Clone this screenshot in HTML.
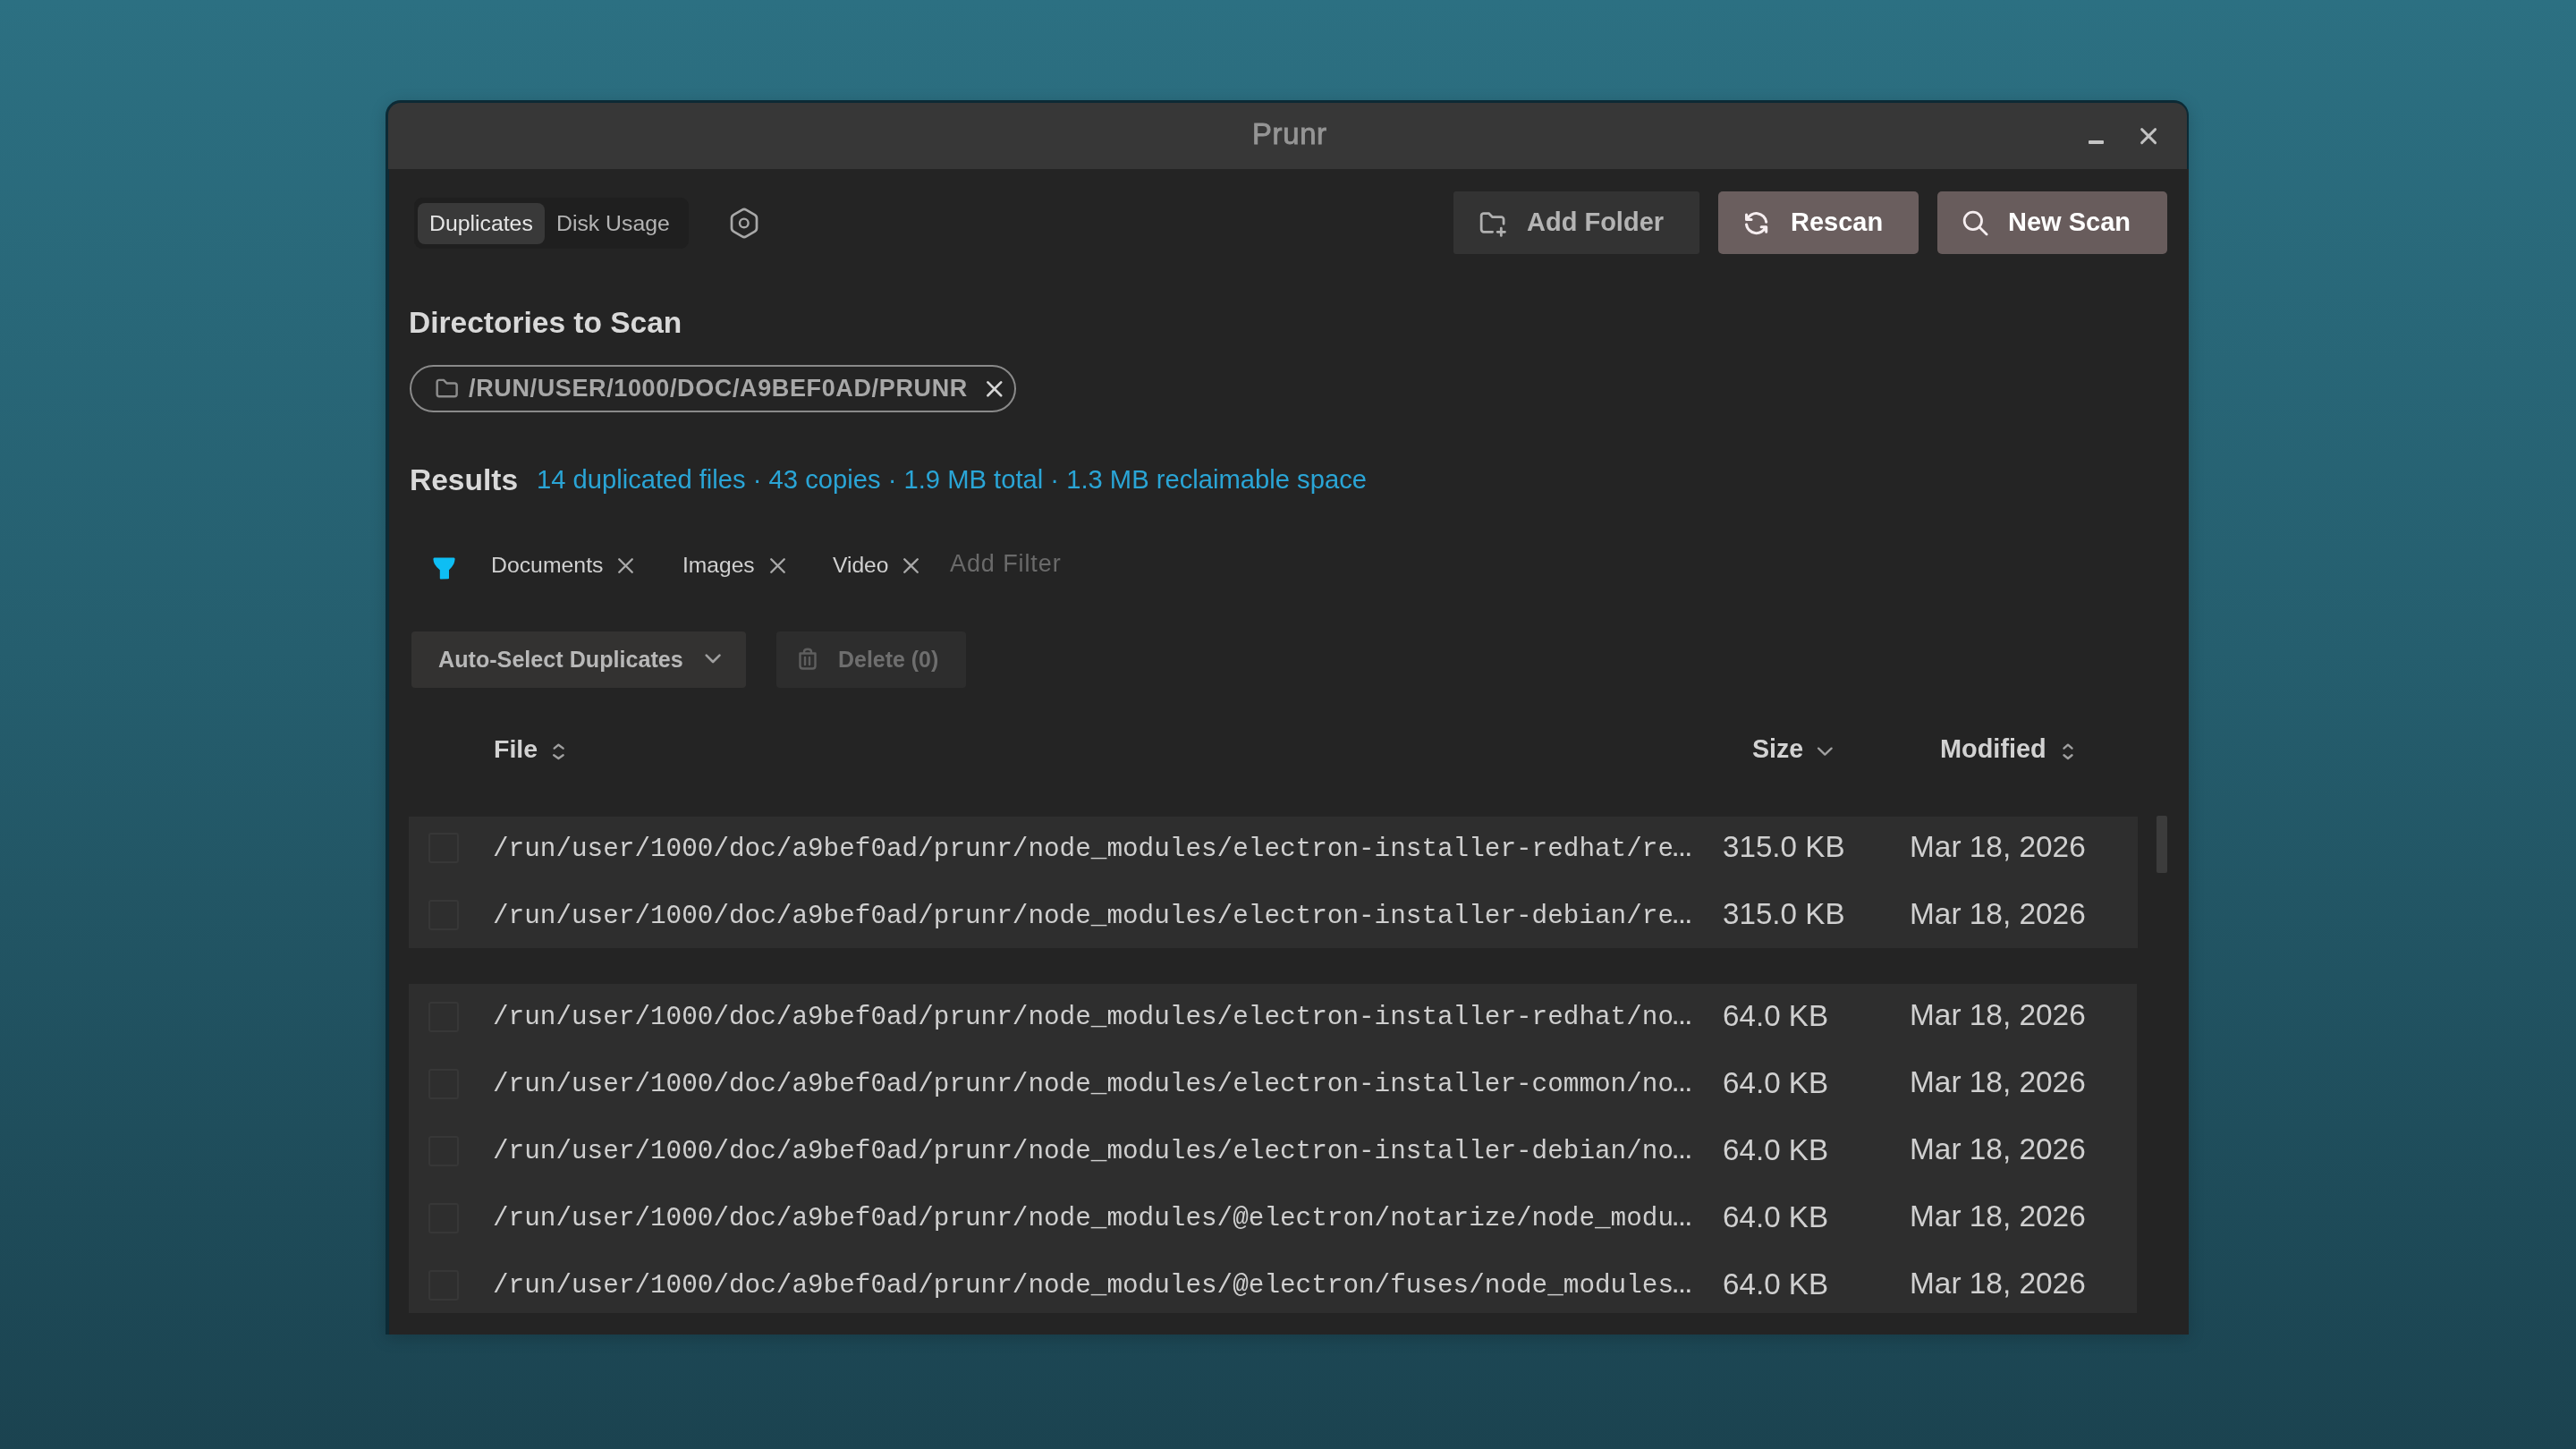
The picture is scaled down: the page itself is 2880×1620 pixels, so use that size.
<!DOCTYPE html>
<html><head><meta charset="utf-8"><style>
html,body{margin:0;padding:0;width:2880px;height:1620px;overflow:hidden}
body{background:linear-gradient(180deg,#2c7082 0%,#255e6e 45%,#1b4350 100%);position:relative;font-family:'Liberation Sans', sans-serif}
body>div,body>svg{position:absolute}
.t{white-space:pre;will-change:transform}
</style></head><body>
<div style="left:431px;top:112px;width:2016px;height:1380px;border-radius:17px 17px 0 0;background:#0c2a35;box-shadow:0 4px 18px rgba(0,0,0,0.18)"></div>
<div style="left:434px;top:115px;width:2011px;height:74px;border-radius:14px 14px 0 0;background:#373737"></div>
<div style="left:435px;top:189px;width:2012px;height:1303px;background:#242424"></div>
<div class="t" style="left:1399.50px;top:133.73px;font-size:32.8px;line-height:32.8px;color:#959595;font-weight:400;font-family:'Liberation Sans', sans-serif;-webkit-text-stroke:0.9px #959595;letter-spacing:0.7px">Prunr</div>
<div style="left:2335px;top:157px;width:17px;height:4px;background:#c4c4c4;border-radius:1px"></div>
<svg style="left:2390px;top:140px;width:24px;height:24px;" viewBox="0 0 24 24" fill="none" stroke-linecap="round" stroke-linejoin="round"><path d="M4.6 4.6L19.6 19.6M19.6 4.6L4.6 19.6" stroke="#c2c2c2" stroke-width="2.9"/></svg>
<div style="left:463px;top:221px;width:307px;height:57px;background:#1f1f1f;border-radius:9px"></div>
<div style="left:467px;top:227px;width:142px;height:46px;background:#393939;border-radius:8px"></div>
<div class="t" style="left:479.50px;top:237.50px;font-size:24.8px;line-height:24.8px;color:#e6e6e6;font-weight:400;font-family:'Liberation Sans', sans-serif;">Duplicates</div>
<div class="t" style="left:621.50px;top:237.50px;font-size:24.8px;line-height:24.8px;color:#b4b4b4;font-weight:400;font-family:'Liberation Sans', sans-serif;">Disk Usage</div>
<svg style="left:810px;top:226px;width:44px;height:48px;" viewBox="0 0 44 48" fill="none" stroke-linecap="round" stroke-linejoin="round"><path d="M24.25 8.60 L33.75 14.10 Q36.00 15.40 36.00 18.00 L36.00 29.00 Q36.00 31.60 33.75 32.90 L24.25 38.40 Q22.00 39.70 19.75 38.40 L10.25 32.90 Q8.00 31.60 8.00 29.00 L8.00 18.00 Q8.00 15.40 10.25 14.10 L19.75 8.60 Q22.00 7.30 24.25 8.60 Z" stroke="#a8a8a8" stroke-width="2.7"/><circle cx="21.8" cy="23.4" r="4.8" stroke="#a8a8a8" stroke-width="2.4"/></svg>
<div style="left:1625px;top:214px;width:275px;height:70px;background:#333333;border-radius:3px"></div>
<div style="left:1921px;top:214px;width:224px;height:70px;background:#6a5e5e;border-radius:5px"></div>
<div style="left:2166px;top:214px;width:257px;height:70px;background:#685c5c;border-radius:5px"></div>
<svg style="left:1652.2px;top:233.3px;width:33.24px;height:33.24px;" viewBox="0 0 24 24" fill="none" stroke-linecap="round" stroke-linejoin="round"><path d="M12 19h-7a2 2 0 0 1 -2 -2v-11a2 2 0 0 1 2 -2h4l3 3h7a2 2 0 0 1 2 2v3.5M16 19h6M19 16v6" stroke="#b0b0b0" stroke-width="2"/></svg>
<div class="t" style="left:1706.50px;top:234.15px;font-size:29px;line-height:29px;color:#b4b4b4;font-weight:700;font-family:'Liberation Sans', sans-serif;">Add Folder</div>
<svg style="left:1946.9px;top:233.3px;width:33.24px;height:33.24px;" viewBox="0 0 24 24" fill="none" stroke-linecap="round" stroke-linejoin="round"><path d="M20 11a8.1 8.1 0 0 0 -15.5 -2m-.5 -4v4h4M4 13a8.1 8.1 0 0 0 15.5 2m.5 4v-4h-4" stroke="#f6eef0" stroke-width="2.2"/></svg>
<div class="t" style="left:2002.00px;top:234.15px;font-size:29px;line-height:29px;color:#ffffff;font-weight:700;font-family:'Liberation Sans', sans-serif;">Rescan</div>
<svg style="left:2192px;top:233.4px;width:33.24px;height:33.24px;" viewBox="0 0 24 24" fill="none" stroke-linecap="round" stroke-linejoin="round"><circle cx="10" cy="10" r="7" stroke="#f6eef0" stroke-width="2"/><path d="M21 21l-6 -6" stroke="#f6eef0" stroke-width="2"/></svg>
<div class="t" style="left:2244.50px;top:234.15px;font-size:29px;line-height:29px;color:#ffffff;font-weight:700;font-family:'Liberation Sans', sans-serif;">New Scan</div>
<div class="t" style="left:457.20px;top:343.64px;font-size:33.5px;line-height:33.5px;color:#d9d9d9;font-weight:700;font-family:'Liberation Sans', sans-serif;">Directories to Scan</div>
<div style="left:458px;top:408px;width:678px;height:53px;box-sizing:border-box;border:2px solid #8a8a8a;border-radius:27px"></div>
<svg style="left:484.9px;top:420.1px;width:29.3px;height:29.3px;" viewBox="0 0 24 24" fill="none" stroke-linecap="round" stroke-linejoin="round"><path d="M5 4h4l3 3h7a2 2 0 0 1 2 2v8a2 2 0 0 1 -2 2h-14a2 2 0 0 1 -2 -2v-11a2 2 0 0 1 2 -2" stroke="#8c8c8c" stroke-width="2"/></svg>
<div class="t" style="left:523.50px;top:421.44px;font-size:27px;line-height:27px;color:#a8a8a8;font-weight:700;font-family:'Liberation Sans', sans-serif;letter-spacing:0.63px">/RUN/USER/1000/DOC/A9BEF0AD/PRUNR</div>
<svg style="left:1096.6px;top:419.9px;width:29.6px;height:29.6px;" viewBox="0 0 24 24" fill="none" stroke-linecap="round" stroke-linejoin="round"><path d="M18 6l-12 12M6 6l12 12" stroke="#d4d4d4" stroke-width="2.2"/></svg>
<div class="t" style="left:457.80px;top:519.64px;font-size:33.5px;line-height:33.5px;color:#d9d9d9;font-weight:700;font-family:'Liberation Sans', sans-serif;">Results</div>
<div class="t" style="left:599.50px;top:521.88px;font-size:29.2px;line-height:29.2px;color:#2aa5d6;font-weight:400;font-family:'Liberation Sans', sans-serif;">14 duplicated files · 43 copies · 1.9 MB total · 1.3 MB reclaimable space</div>
<svg style="left:484px;top:623px;width:25px;height:25px;" viewBox="0 0 25 25" fill="none" stroke-linecap="round" stroke-linejoin="round"><path d="M1.6 0.6 H23.4 Q24.8 0.6 24.6 2.2 Q24.2 5.5 23.3 7.6 Q21.2 11.6 18 14.2 V23.2 Q18 24.1 17 24.2 L8.8 24.6 Q7.8 24.6 7.8 23.6 V14.2 Q4 11.6 1.8 7.6 Q0.7 5.5 0.4 2.2 Q0.3 0.6 1.6 0.6 Z" fill="#0ebef4" stroke="none"/></svg>
<div class="t" style="left:548.50px;top:619.50px;font-size:24.8px;line-height:24.8px;color:#d0d0d0;font-weight:400;font-family:'Liberation Sans', sans-serif;">Documents</div>
<svg style="left:685.3px;top:618.3px;width:29px;height:29px;" viewBox="0 0 24 24" fill="none" stroke-linecap="round" stroke-linejoin="round"><path d="M18 6l-12 12M6 6l12 12" stroke="#a8a8a8" stroke-width="2"/></svg>
<div class="t" style="left:762.50px;top:619.67px;font-size:24.6px;line-height:24.6px;color:#d0d0d0;font-weight:400;font-family:'Liberation Sans', sans-serif;">Images</div>
<svg style="left:854.8px;top:618.3px;width:29px;height:29px;" viewBox="0 0 24 24" fill="none" stroke-linecap="round" stroke-linejoin="round"><path d="M18 6l-12 12M6 6l12 12" stroke="#a8a8a8" stroke-width="2"/></svg>
<div class="t" style="left:930.50px;top:619.67px;font-size:24.6px;line-height:24.6px;color:#d0d0d0;font-weight:400;font-family:'Liberation Sans', sans-serif;">Video</div>
<svg style="left:1003.8px;top:618.3px;width:29px;height:29px;" viewBox="0 0 24 24" fill="none" stroke-linecap="round" stroke-linejoin="round"><path d="M18 6l-12 12M6 6l12 12" stroke="#a8a8a8" stroke-width="2"/></svg>
<div class="t" style="left:1062.00px;top:617.14px;font-size:27px;line-height:27px;color:#6a6a6a;font-weight:400;font-family:'Liberation Sans', sans-serif;letter-spacing:0.9px">Add Filter</div>
<div style="left:460px;top:706px;width:373.5px;height:63px;background:#333231;border-radius:4px"></div>
<div class="t" style="left:489.80px;top:725.01px;font-size:25.15px;line-height:25.15px;color:#b8b8b8;font-weight:700;font-family:'Liberation Sans', sans-serif;">Auto-Select Duplicates</div>
<svg style="left:780px;top:720px;width:34px;height:34px;" viewBox="0 0 34 34" fill="none" stroke-linecap="round" stroke-linejoin="round"><path d="M9.7 12.6L17.1 20L24.5 12.6" stroke="#a0a0a0" stroke-width="2.6"/></svg>
<div style="left:868px;top:706px;width:212px;height:63px;background:#2d2d2d;border-radius:4px"></div>
<svg style="left:888px;top:720px;width:30px;height:34px;" viewBox="0 0 30 34" fill="none" stroke-linecap="round" stroke-linejoin="round"><path d="M6.5 10.5 H23.5 V24.5 Q23.5 27.5 20.5 27.5 H9.5 Q6.5 27.5 6.5 24.5 Z M11 10.5 V8.5 Q11 5.8 15 5.8 Q19 5.8 19 8.5 V10.5 M12 15 V23 M17 15 V23" stroke="#5e5e5e" stroke-width="2.4"/></svg>
<div class="t" style="left:937.00px;top:725.17px;font-size:24.95px;line-height:24.95px;color:#6e6e6e;font-weight:700;font-family:'Liberation Sans', sans-serif;">Delete (0)</div>
<div class="t" style="left:551.50px;top:823.47px;font-size:28.5px;line-height:28.5px;color:#d2d2d2;font-weight:700;font-family:'Liberation Sans', sans-serif;">File</div>
<svg style="left:612px;top:826px;width:24px;height:28px;" viewBox="0 0 24 28" fill="none" stroke-linecap="round" stroke-linejoin="round"><path d="M7.7 10.65L12.4 6.7L17.6 10.65M7.2 18.3L12.4 22L17.6 18.3" stroke="#a0a0a0" stroke-width="2.4"/></svg>
<div class="t" style="left:1959.00px;top:823.18px;font-size:28.6px;line-height:28.6px;color:#d2d2d2;font-weight:700;font-family:'Liberation Sans', sans-serif;">Size</div>
<svg style="left:2028px;top:826px;width:24px;height:24px;" viewBox="0 0 24 24" fill="none" stroke-linecap="round" stroke-linejoin="round"><path d="M5.07 10.6L12.3 17.6L19.6 10.6" stroke="#a0a0a0" stroke-width="2.3"/></svg>
<div class="t" style="left:2168.50px;top:822.93px;font-size:28.9px;line-height:28.9px;color:#d2d2d2;font-weight:700;font-family:'Liberation Sans', sans-serif;">Modified</div>
<svg style="left:2300px;top:826px;width:24px;height:28px;" viewBox="0 0 24 28" fill="none" stroke-linecap="round" stroke-linejoin="round"><path d="M7.5 10.65L12 6.7L16.5 10.65M7.5 18.3L12 22L16.5 18.3" stroke="#a0a0a0" stroke-width="2.4"/></svg>
<div style="left:457px;top:913px;width:1933px;height:147px;background:#2e2e2e"></div>
<div style="left:457px;top:1100px;width:1932px;height:368px;background:#2e2e2e"></div>
<div style="left:2411px;top:912px;width:12px;height:64px;background:#3c3c3c;border-radius:2px"></div>
<div style="left:478.5px;top:931.3px;width:34.5px;height:34px;box-sizing:border-box;border:2px solid #373737;border-radius:3px"></div>
<div class="t" style="left:551.00px;top:934.52px;font-size:29.33px;line-height:29.33px;color:#cfcfcf;font-weight:400;font-family:'Liberation Mono', monospace;">/run/user/1000/doc/a9bef0ad/prunr/node_modules/electron-installer-redhat/re<span style="font-family:'Liberation Sans', sans-serif;font-size:23px;font-weight:700;letter-spacing:-2.4px;margin-left:-2px">…</span></div>
<div class="t" style="left:1925.50px;top:930.09px;font-size:33.2px;line-height:33.2px;color:#d0d0d0;font-weight:400;font-family:'Liberation Sans', sans-serif;">315.0 KB</div>
<div class="t" style="left:2134.80px;top:929.92px;font-size:33.4px;line-height:33.4px;color:#d0d0d0;font-weight:400;font-family:'Liberation Sans', sans-serif;">Mar 18, 2026</div>
<div style="left:478.5px;top:1006.3px;width:34.5px;height:34px;box-sizing:border-box;border:2px solid #373737;border-radius:3px"></div>
<div class="t" style="left:551.00px;top:1009.52px;font-size:29.33px;line-height:29.33px;color:#cfcfcf;font-weight:400;font-family:'Liberation Mono', monospace;">/run/user/1000/doc/a9bef0ad/prunr/node_modules/electron-installer-debian/re<span style="font-family:'Liberation Sans', sans-serif;font-size:23px;font-weight:700;letter-spacing:-2.4px;margin-left:-2px">…</span></div>
<div class="t" style="left:1925.50px;top:1005.09px;font-size:33.2px;line-height:33.2px;color:#d0d0d0;font-weight:400;font-family:'Liberation Sans', sans-serif;">315.0 KB</div>
<div class="t" style="left:2134.80px;top:1004.92px;font-size:33.4px;line-height:33.4px;color:#d0d0d0;font-weight:400;font-family:'Liberation Sans', sans-serif;">Mar 18, 2026</div>
<div style="left:478.5px;top:1119.8px;width:34.5px;height:34px;box-sizing:border-box;border:2px solid #373737;border-radius:3px"></div>
<div class="t" style="left:551.00px;top:1123.02px;font-size:29.33px;line-height:29.33px;color:#cfcfcf;font-weight:400;font-family:'Liberation Mono', monospace;">/run/user/1000/doc/a9bef0ad/prunr/node_modules/electron-installer-redhat/no<span style="font-family:'Liberation Sans', sans-serif;font-size:23px;font-weight:700;letter-spacing:-2.4px;margin-left:-2px">…</span></div>
<div class="t" style="left:1925.50px;top:1118.59px;font-size:33.2px;line-height:33.2px;color:#d0d0d0;font-weight:400;font-family:'Liberation Sans', sans-serif;">64.0 KB</div>
<div class="t" style="left:2134.80px;top:1118.42px;font-size:33.4px;line-height:33.4px;color:#d0d0d0;font-weight:400;font-family:'Liberation Sans', sans-serif;">Mar 18, 2026</div>
<div style="left:478.5px;top:1194.8px;width:34.5px;height:34px;box-sizing:border-box;border:2px solid #373737;border-radius:3px"></div>
<div class="t" style="left:551.00px;top:1198.02px;font-size:29.33px;line-height:29.33px;color:#cfcfcf;font-weight:400;font-family:'Liberation Mono', monospace;">/run/user/1000/doc/a9bef0ad/prunr/node_modules/electron-installer-common/no<span style="font-family:'Liberation Sans', sans-serif;font-size:23px;font-weight:700;letter-spacing:-2.4px;margin-left:-2px">…</span></div>
<div class="t" style="left:1925.50px;top:1193.59px;font-size:33.2px;line-height:33.2px;color:#d0d0d0;font-weight:400;font-family:'Liberation Sans', sans-serif;">64.0 KB</div>
<div class="t" style="left:2134.80px;top:1193.42px;font-size:33.4px;line-height:33.4px;color:#d0d0d0;font-weight:400;font-family:'Liberation Sans', sans-serif;">Mar 18, 2026</div>
<div style="left:478.5px;top:1269.8px;width:34.5px;height:34px;box-sizing:border-box;border:2px solid #373737;border-radius:3px"></div>
<div class="t" style="left:551.00px;top:1273.02px;font-size:29.33px;line-height:29.33px;color:#cfcfcf;font-weight:400;font-family:'Liberation Mono', monospace;">/run/user/1000/doc/a9bef0ad/prunr/node_modules/electron-installer-debian/no<span style="font-family:'Liberation Sans', sans-serif;font-size:23px;font-weight:700;letter-spacing:-2.4px;margin-left:-2px">…</span></div>
<div class="t" style="left:1925.50px;top:1268.59px;font-size:33.2px;line-height:33.2px;color:#d0d0d0;font-weight:400;font-family:'Liberation Sans', sans-serif;">64.0 KB</div>
<div class="t" style="left:2134.80px;top:1268.42px;font-size:33.4px;line-height:33.4px;color:#d0d0d0;font-weight:400;font-family:'Liberation Sans', sans-serif;">Mar 18, 2026</div>
<div style="left:478.5px;top:1344.8px;width:34.5px;height:34px;box-sizing:border-box;border:2px solid #373737;border-radius:3px"></div>
<div class="t" style="left:551.00px;top:1348.02px;font-size:29.33px;line-height:29.33px;color:#cfcfcf;font-weight:400;font-family:'Liberation Mono', monospace;">/run/user/1000/doc/a9bef0ad/prunr/node_modules/@electron/notarize/node_modu<span style="font-family:'Liberation Sans', sans-serif;font-size:23px;font-weight:700;letter-spacing:-2.4px;margin-left:-2px">…</span></div>
<div class="t" style="left:1925.50px;top:1343.59px;font-size:33.2px;line-height:33.2px;color:#d0d0d0;font-weight:400;font-family:'Liberation Sans', sans-serif;">64.0 KB</div>
<div class="t" style="left:2134.80px;top:1343.42px;font-size:33.4px;line-height:33.4px;color:#d0d0d0;font-weight:400;font-family:'Liberation Sans', sans-serif;">Mar 18, 2026</div>
<div style="left:478.5px;top:1419.8px;width:34.5px;height:34px;box-sizing:border-box;border:2px solid #373737;border-radius:3px"></div>
<div class="t" style="left:551.00px;top:1423.02px;font-size:29.33px;line-height:29.33px;color:#cfcfcf;font-weight:400;font-family:'Liberation Mono', monospace;">/run/user/1000/doc/a9bef0ad/prunr/node_modules/@electron/fuses/node_modules<span style="font-family:'Liberation Sans', sans-serif;font-size:23px;font-weight:700;letter-spacing:-2.4px;margin-left:-2px">…</span></div>
<div class="t" style="left:1925.50px;top:1418.59px;font-size:33.2px;line-height:33.2px;color:#d0d0d0;font-weight:400;font-family:'Liberation Sans', sans-serif;">64.0 KB</div>
<div class="t" style="left:2134.80px;top:1418.42px;font-size:33.4px;line-height:33.4px;color:#d0d0d0;font-weight:400;font-family:'Liberation Sans', sans-serif;">Mar 18, 2026</div>
</body></html>
